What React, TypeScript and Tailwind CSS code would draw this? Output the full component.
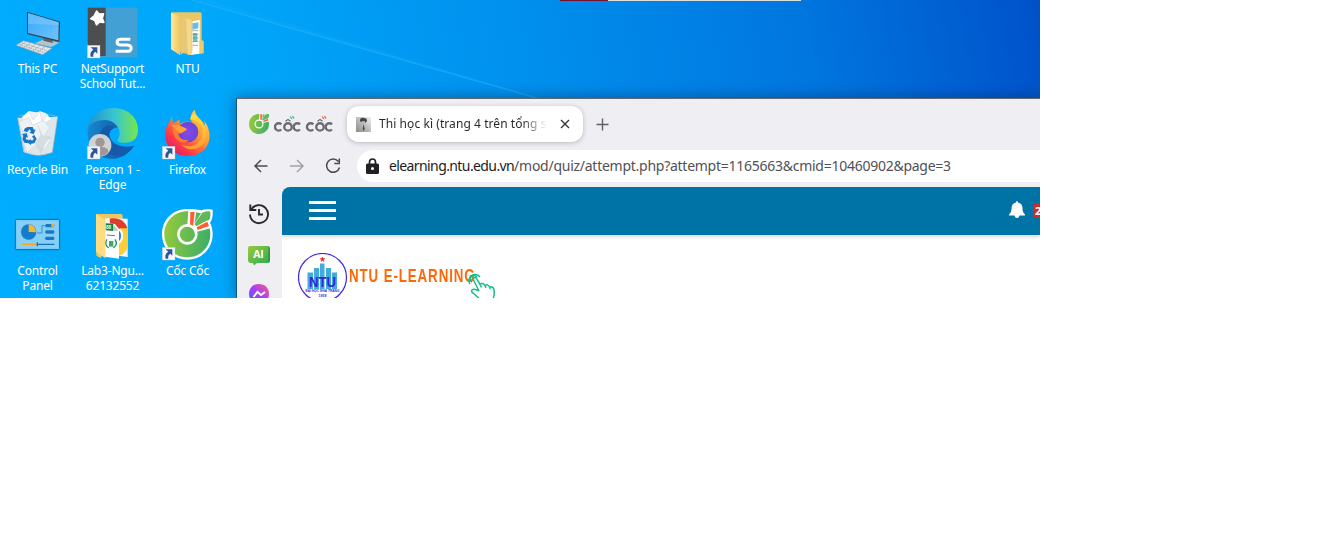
import type { ReactNode } from "react";

function Shortcut({ x, y }: { x: number; y: number }) {
  return (
    <g transform={`translate(${x} ${y})`}>
      <rect width="38" height="38" fill="#f4f6f8" stroke="#b9c4cf" strokeWidth="1" />
      <path d="M10 6h20v19l-6-6c-6 4-7 8-6 15h-8c-3-10 1-17 8-21z" fill="#2c559c" />
    </g>
  );
}

function PcIcon() {
  return (
    <svg className="h-[61px] w-[75px]" viewBox="0 0 225 183">
      <defs>
        <linearGradient id="screen" x1="0" x2="1" y1="0" y2="1">
          <stop offset="0" stopColor="#35a8f8" />
          <stop offset="1" stopColor="#71c3ff" />
        </linearGradient>
      </defs>
      <path d="M104 130l28-12 46 10-24 13z" fill="#b9c2c8" />
      <path d="M130 112l28 7v10l-28-7z" fill="#59646c" />
      <path d="M81 35l99 30-2 61-97-24z" fill="#38454f" />
      <path d="M84 39l92 28-1 54-91-22z" fill="url(#screen)" />
      <path d="M84 39l92 28v8L84 72z" fill="#8bd0ff" opacity=".45" />
      <path d="M70 122l86 23-28 19-80-28z" fill="#dfe4e7" stroke="#909ca5" strokeWidth="2" />
      <path d="M65 129l75 23M58 134l75 24M78 125l-20 13M92 129l-21 14M106 133l-21 15M120 137l-21 15M134 141l-22 16" stroke="#8d989f" strokeWidth="2" strokeDasharray="5 2" />
    </svg>
  );
}

function NetSupportIcon() {
  return (
    <svg className="h-[61px] w-[75px]" viewBox="225 0 225 183">
      <rect x="263" y="23" width="149" height="149" fill="#43a0d5" />
      <rect x="263" y="23" width="54" height="145" fill="#4c4e50" />
      <path d="M290 34l7 9 13-1-4 13 5 12-12-2-9 9-5-13-12-5 10-8z" fill="#fff" stroke="#fff" strokeWidth="6" strokeLinejoin="round" />
      <path d="M391 118h-27c-17 0-17 17 0 17h16c18 0 18 19 0 19h-33" fill="none" stroke="#fff" strokeWidth="9" />
      <Shortcut x={262} y={136} />
    </svg>
  );
}

function FolderIcon() {
  return (
    <svg className="h-[61px] w-[75px]" viewBox="450 0 225 183">
      <defs>
        <linearGradient id="folder">
          <stop offset="0" stopColor="#ffe69b" />
          <stop offset="1" stopColor="#edc95f" />
        </linearGradient>
      </defs>
      <path d="M514 37h87q4 0 4 5v78l6 4v36h-50l-47-10z" fill="#e9c765" />
      <path d="M572 66l27-7v102l-27 4z" fill="#fff" />
      <path d="M577 70l18-3v18l-18 4z" fill="#67bce8" />
      <path d="M577 92h18M577 103h18M577 114h18M577 125h18M577 136h17" stroke="#70808c" strokeWidth="2" />
      <path d="M579 99h13v26h-13z" fill="#2fa5a6" opacity=".7" />
      <path d="M598 122h12v38l-12 2z" fill="#f0cc69" />
      <path d="M514 39l58 15q5 1 5 7v90q0 8-6 14l-30-8z" fill="#e6c166" />
      <path d="M513 38l27 10v118l-22-15-5-6z" fill="url(#folder)" />
      <path d="M542 49l21 6v96l-21 13z" fill="#e9c875" />
      <path d="M559 54l16 6v102l-12 3z" fill="#f5d987" />
    </svg>
  );
}

function BinIcon() {
  return (
    <svg className="h-[61px] w-[75px]" viewBox="0 9 225 183">
      <path d="M53 60l120-4-16 107q-40 18-86 0z" fill="#dfe6ea" />
      <path d="M53 60l20 103 40 10 44-9 16-108-17-5-96 1z" fill="none" stroke="#a8b4bc" strokeWidth="2" />
      <path d="M65 58l21-18 19 6 15-6 18 6 15 17-31 17-39 2z" fill="#fff" />
      <path d="M85 39l15 27 20-25 6 28 18-20M60 70l27-12 11 24 32-15 19 22-14 21 19 14-20 31-27-14-25 22-14-33 19-20-22-13-7-24z" fill="#eef2f4" stroke="#d0d8dd" strokeWidth="2" />
      <path d="M112 75l9 36-15 24 17 34 15-36 17-15-28-8z" fill="#c7d0d5" opacity=".6" />
      <path d="M75 91l8-4h15l4 9 5-2-6 15-13-5 5-4-4-6-8 9-10-5zM103 111l7 12-7 13-10 1v5l-11-10 10-10v5h7l2-5-5-7zM66 108l14-2 4 13-5-2-2 7 9 1v11l-13-2-6-11 3-10z" fill="#1976c6" />
    </svg>
  );
}

function EdgeIcon() {
  return (
    <svg className="h-[61px] w-[75px]" viewBox="225 9 225 183">
      <defs>
        <linearGradient id="edgeTop">
          <stop offset="0" stopColor="#208fd1" />
          <stop offset=".55" stopColor="#39c6d0" />
          <stop offset="1" stopColor="#76e848" />
        </linearGradient>
        <linearGradient id="edgeBase">
          <stop offset="0" stopColor="#1686d2" />
          <stop offset="1" stopColor="#164d98" />
        </linearGradient>
      </defs>
      <path d="M263 96q14-48 60-50c31 1 48 25 46 48-20-13-40-2-40 15 0 29 39 45 73 34-18 29-47 41-72 39-47-4-69-43-67-86z" fill="url(#edgeBase)" />
      <path d="M321 83c-31 12-30 63 0 82 28 17 58 7 82-22-31 9-70 3-76-26-2-12 4-23 16-27-5-7-13-9-22-7z" fill="#155aaa" />
      <path d="M262 96c5-37 36-66 77-66 44 0 75 27 75 66 0 28-18 39-42 38-20 0-23-7-16-15 11-20-9-53-42-53-25 0-46 12-52 30z" fill="url(#edgeTop)" />
      <circle cx="300" cy="142" r="34" fill="#d1d2d3" />
      <circle cx="300" cy="133" r="14" fill="#9f9795" />
      <path d="M276 162q3-15 17-15h15q17 1 17 15-9 12-25 12-18 0-24-12z" fill="#9f9795" />
      <Shortcut x={262} y={145} />
    </svg>
  );
}

function FirefoxIcon() {
  return (
    <svg className="h-[61px] w-[75px]" viewBox="450 9 225 183">
      <defs>
        <linearGradient id="fire" x1="1" y1="0" x2=".15" y2="1">
          <stop offset="0" stopColor="#fff44f" />
          <stop offset=".45" stopColor="#ff9633" />
          <stop offset=".75" stopColor="#ff3b45" />
          <stop offset="1" stopColor="#d51572" />
        </linearGradient>
        <linearGradient id="flame" x1=".5" y1="0" x2=".5" y2="1">
          <stop offset="0" stopColor="#ffe23e" />
          <stop offset="1" stopColor="#ff9a33" />
        </linearGradient>
        <radialGradient id="globe">
          <stop offset="0" stopColor="#8b45ea" />
          <stop offset="1" stopColor="#6548d9" />
        </radialGradient>
      </defs>
      <path d="M518 56c-3 7-1 14 4 19l17-11v15c14-10 28-11 37-4-7-20-2-31 8-40 2 22 25 29 30 49 1-7 0-14-3-18 17 20 22 49 14 69-10 26-34 39-63 39-41 0-67-29-66-65 0-20 8-31 14-37 0-7 3-12 8-16z" fill="url(#fire)" />
      <path d="M570 64c35 6 48 31 35 55-11 24-39 33-62 19 22 30 76 15 76-26 0-22-8-34-15-43l-20-20c-9 3-13 7-14 15z" fill="url(#flame)" />
      <circle cx="564" cy="102" r="31" fill="url(#globe)" />
      <path d="M524 82l13 7q19-2 24 6l-16 10-11 4c5 13 16 20 33 16-15 16-38 8-44-13-7-14-6-27 1-30z" fill="#ff7930" />
      <path d="M515 82c16-4 32 2 46 12l-15 10c-13 0-20-9-31-22z" fill="#ffa038" />
      <Shortcut x={487} y={145} />
    </svg>
  );
}

function ControlIcon() {
  return (
    <svg className="h-[61px] w-[75px]" viewBox="0 12 225 183">
      <rect x="46" y="64" width="133" height="91" rx="3" fill="#72c6ef" stroke="#166794" strokeWidth="3" />
      <rect x="50" y="68" width="125" height="83" fill="#86d0f8" />
      <circle cx="86" cy="102" r="23" fill="#147ccc" />
      <path d="M86 102V79a23 23 0 0 1 22 24z" fill="#f9b72c" />
      <path d="M111 105h15V83h13M137 102h8M134 121h11" fill="none" stroke="#1977ae" strokeWidth="2" />
      <g fill="#1678c6">
        <rect x="136" y="78" width="27" height="10" rx="4" />
        <rect x="136" y="97" width="27" height="10" rx="4" />
        <rect x="136" y="116" width="27" height="10" rx="4" />
      </g>
      <path d="M154 78h8v9h-8z" fill="#f4a92b" />
      <path d="M65 139h47" stroke="#f6a51b" strokeWidth="4" />
      <path d="M112 139h51M112 133v12" stroke="#1671bd" strokeWidth="4" />
    </svg>
  );
}

function LabIcon() {
  return (
    <svg className="h-[61px] w-[75px]" viewBox="225 12 225 183">
      <path d="M289 48h74q5 0 5 6v19l-66 107-13-7z" fill="#edc75f" />
      <path d="M315 61l68 1v115l-62-8z" fill="#f1f5f5" />
      <path d="M329 62c31-5 53 11 55 40l-52 1z" fill="#de3c2d" />
      <path d="M360 91h24v55c-4 14-14 23-30 29l-9-20z" fill="#ffce36" />
      <path d="M352 91c14 1 20 14 17 27-1 12-8 20-18 20z" fill="#fff" />
      <path d="M353 97q10 2 10 17t-11 17z" fill="#2683dc" />
      <path d="M315 74l30 4 12 16v88l-42-6z" fill="#fff" />
      <path d="M317 76l23 1v22l-23-2z" fill="#14823d" />
      <text x="318" y="94" fontSize="14" fontWeight="700" fontFamily="Liberation Sans, sans-serif" fill="#fff">88</text>
      <path d="M341 80v18h14z" fill="#b9c6c1" />
      <path d="M321 124q-10 15 5 26M345 124q10 15-5 26" fill="none" stroke="#17985a" strokeWidth="4" />
      <path d="M327 129h13v17h-13z" fill="#3da873" />
      <path d="M320 111l25 2" stroke="#777" strokeWidth="3" />
      <path d="M288 48l28 18v115l-28-20z" fill="#ffdc82" />
    </svg>
  );
}

function Leaf({ outlined = false }: { outlined?: boolean }) {
  return (
    <g>
      {outlined && (
        <path d="M562 33c-44 0-76 33-76 76s33 76 76 76 76-33 76-76c0-14-3-25-8-35 8-10 9-24 8-39-12-2-24-2-34 2-12-3-26-4-42-4z" fill="#fff" />
      )}
      <path d="M562 40c-39 0-69 30-69 69s30 69 69 69 69-30 69-69c0-13-3-25-9-35 8-9 10-20 9-32-10-1-20 0-29 4-12-4-25-6-40-6z" fill="url(#leafFill)" />
      <path d="M565 38h24l-5 38 24-38 10 5-24 36 32-13 6 25-44 11-26-22z" fill="#fff" />
      <path d="M583 79l24-35q10-5 23-4 0 17-9 27l-31 18z" fill="#65b85a" />
      <path d="M571 42h13l-5 46-9-2zM590 88l32-17 5 13-34 12z" fill="#ff5b35" />
      <circle cx="562" cy="109" r="27" fill="url(#leafFill)" stroke="#fff" strokeWidth="8" />
    </g>
  );
}

function CocIcon() {
  return (
    <svg className="h-[61px] w-[75px]" viewBox="450 12 225 183">
      <defs>
        <linearGradient id="leafFill" gradientUnits="userSpaceOnUse" x1="493" y1="100" x2="631" y2="120">
          <stop stopColor="#95c93b" />
          <stop offset="1" stopColor="#3cae68" />
        </linearGradient>
      </defs>
      <Leaf outlined />
      <Shortcut x={487} y={148} />
    </svg>
  );
}

const desktopItems: { icon: ReactNode; lines: string[] }[] = [
  { icon: <PcIcon />, lines: ["This PC"] },
  { icon: <NetSupportIcon />, lines: ["NetSupport", "School Tut..."] },
  { icon: <FolderIcon />, lines: ["NTU"] },
  { icon: <BinIcon />, lines: ["Recycle Bin"] },
  { icon: <EdgeIcon />, lines: ["Person 1 -", "Edge"] },
  { icon: <FirefoxIcon />, lines: ["Firefox"] },
  { icon: <ControlIcon />, lines: ["Control", "Panel"] },
  { icon: <LabIcon />, lines: ["Lab3-Ngu...", "62132552"] },
  { icon: <CocIcon />, lines: ["Cốc Cốc"] },
];

function TabStrip() {
  return (
    <div className="flex h-[51px] shrink-0 items-start pl-[12px]">
      <svg className="mt-[15px] h-[20px] w-[20px] shrink-0" viewBox="493 40 138 138">
        <Leaf />
      </svg>
      <svg className="mt-[12px] ml-[5px] h-[24px] w-[62px] shrink-0" viewBox="0 0 62 24">
        <g fill="none" stroke="#6b6d72" strokeWidth="2.400">
          <path d="M7.300 13.300a3.700 3.700 0 1 0 0 5.200M26 13.300a3.700 3.700 0 1 0 0 5.200M39.300 13.300a3.700 3.700 0 1 0 0 5.200M58 13.300a3.700 3.700 0 1 0 0 5.200" />
          <circle cx="14" cy="15.900" r="3.700" />
          <circle cx="46" cy="15.900" r="3.700" />
          <path d="M11.500 10.300l2.500-1.800 2.500 1.800M43.500 10.300l2.500-1.800 2.500 1.800" strokeWidth="1.200" />
        </g>
        <path d="M16 5.500l2 2.500M18.500 5l1.500 2.500" stroke="#36b572" strokeWidth="1.200" />
        <path d="M48 5.500l2 2.500M50.500 5l1.500 2.500" stroke="#ed593d" strokeWidth="1.200" />
      </svg>
      <div className="mt-[7px] ml-[11px] flex h-[36px] w-[236px] shrink-0 items-center rounded-[12px] bg-white pl-[9px] shadow-[0_1px_5px_rgba(60,60,80,0.3)]">
        <svg className="h-[15px] w-[15px] shrink-0" viewBox="0 0 15 15">
          <defs>
            <linearGradient id="portrait" x1="1" x2="0" y1="0" y2="1">
              <stop stopColor="#f2f2f2" />
              <stop offset="1" stopColor="#888" />
            </linearGradient>
          </defs>
          <path d="M0 0h15v15H0z" fill="url(#portrait)" />
          <path d="M4 4q0-4 4-3 3 0 3 3L9 6 8 4 5 5z" fill="#444" />
          <path d="M6 4.500l2.500-.5.5 2-1.500 2H6z" fill="#bbb" />
          <path d="M7.500 7l1.200 5-1 2-.9-2z" fill="#444" />
        </svg>
        <div className="ml-[8px] w-[168px] overflow-hidden bg-linear-to-r from-[#25262a] from-85% to-transparent bg-clip-text text-[12px] leading-[20px] tracking-[0.07px] whitespace-nowrap text-transparent">
          Thi học kì (trang 4 trên tổng s
        </div>
        <svg className="ml-[13px] h-[10px] w-[10px]" viewBox="0 0 10 10">
          <path d="M1 1l8 8M9 1L1 9" stroke="#303136" strokeWidth="1.300" />
        </svg>
      </div>
      <svg className="mt-[19px] ml-[13px] h-[13px] w-[13px]" viewBox="0 0 13 13">
        <path d="M6.500 .5v12M.5 6.500h12" stroke="#606166" strokeWidth="1.400" />
      </svg>
    </div>
  );
}

function AddressBar() {
  return (
    <div className="flex h-[32px] shrink-0 items-center">
      <svg className="h-[32px] w-[120px] shrink-0" viewBox="0 0 120 32" fill="none" strokeWidth="1.500">
        <path d="M30.500 16H18.500M24 10l-6 6 6 6" stroke="#4b4c50" />
        <path d="M53 16h12M60 10l6 6-6 6" stroke="#a3a4a9" />
        <path d="M101.300 11.500a6.600 6.600 0 1 0 1.200 6M102.300 8.500v5h-5" stroke="#4b4c50" />
      </svg>
      <div className="flex h-[32px] flex-1 items-center rounded-l-[16px] bg-white pl-[9px]">
        <svg className="h-[17px] w-[13px] shrink-0" viewBox="0 0 13 17">
          <path d="M3.500 6.500V4a3 3 0 0 1 6 0v2.500" fill="none" stroke="#202124" strokeWidth="1.700" />
          <rect y="5.500" width="13" height="10.500" rx="1.500" fill="#202124" />
          <circle cx="6.500" cy="10.500" r="1.500" fill="#fff" />
        </svg>
        <div className="ml-[10px] text-[14px] leading-[20px] tracking-[-0.26px] whitespace-nowrap text-[#505156]">
          <span className="tracking-[-0.6px] text-[#202124]">elearning.ntu.edu.vn</span>/mod/quiz/attempt.php?attempt=1165663&amp;cmid=10460902&amp;page=3
        </div>
      </div>
    </div>
  );
}

function SideRail() {
  return (
    <div className="w-[45px] shrink-0">
      <svg className="h-[115px] w-[45px]" viewBox="0 0 45 115">
        <defs>
          <linearGradient id="ai" x1="0" y1="0" x2="1" y2="1">
            <stop stopColor="#99ca3c" />
            <stop offset="1" stopColor="#28aa56" />
          </linearGradient>
          <linearGradient id="msg" x1="0" y1="1" x2="1" y2="0">
            <stop stopColor="#4b62ff" />
            <stop offset=".5" stopColor="#a340f5" />
            <stop offset="1" stopColor="#ff5b8a" />
          </linearGradient>
        </defs>
        <path d="M14 23A9 9 0 1 1 13 27.500M13.300 17.500v5.500h6M22 22v5.500h4" fill="none" stroke="#292a2e" strokeWidth="1.900" />
        <path d="M13 59h18q2 0 2 2v12q0 3-2 3H20l-3 2.500-1-2.500h-2q-3 0-3-3V61q0-2 2-2z" fill="url(#ai)" />
        <path d="M31.500 60q1.500 0 1.500 2v11q0 2-1.500 2z" fill="#227d4b" opacity=".7" />
        <text x="21.500" y="70.700" textAnchor="middle" fill="#fff" fontSize="10.500" fontWeight="700" fontFamily="Open Sans, sans-serif">AI</text>
        <path d="M22 97c6 0 10 4 10 10s-4 10-10 10-10-4-10-10 4-10 10-10z" fill="url(#msg)" />
        <path d="M16.500 110l4-5 3.500 3 4-3" fill="none" stroke="#fff" strokeWidth="2" />
      </svg>
    </div>
  );
}

function SchoolSeal() {
  return (
    <svg className="h-[50px] w-[50px] shrink-0" viewBox="0 0 50 50">
      <circle cx="24.500" cy="24.500" r="24" fill="#fff" stroke="#3a26e3" strokeWidth="1.200" />
      <path d="M9.500 19.500H15V36H9.500zM16 15h5v21h-5zM22 10.500h4.500V36H22zM28 15h5v21h-5zM34 19.500h5V36h-5z" fill="#43aade" />
      <path d="M24.500 4l.6 1.500 1.700.1-1.300 1.100.4 1.700-1.400-.9-1.400.9.4-1.700-1.300-1.100 1.700-.1z" fill="#ef2929" stroke="#ef2929" strokeWidth=".6" />
      <text x="24.500" y="34" textAnchor="middle" textLength="27" lengthAdjust="spacingAndGlyphs" fontFamily="Liberation Sans, sans-serif" fontSize="14.500" fontWeight="700" fill="#3425db">NTU</text>
      <text x="24.500" y="39.300" textAnchor="middle" textLength="34" lengthAdjust="spacingAndGlyphs" fontFamily="Liberation Sans, sans-serif" fontSize="3.800" fontWeight="700" fill="#3a26e3">ĐẠI HỌC NHA TRANG</text>
      <text x="24.500" y="43.500" textAnchor="middle" fontFamily="Liberation Sans, sans-serif" fontSize="3.500" fontWeight="700" fill="#3a26e3">1959</text>
    </svg>
  );
}

function Page() {
  return (
    <div className="min-w-0 flex-1 overflow-hidden rounded-tl-[8px] bg-white">
      <div className="flex h-[48px] items-start bg-[#0073a6] shadow-[0_2px_4px_rgba(0,0,0,0.16)]">
        <svg className="mt-[14px] ml-[27px] h-[19px] w-[27px]" viewBox="0 0 27 19">
          <path d="M0 1.500h27M0 9.500h27M0 17.500h27" stroke="#fff" strokeWidth="3" />
        </svg>
        <svg className="mt-[14px] ml-auto h-[17px] w-[16px]" viewBox="0 0 16 17">
          <path d="M8 0q1 0 1 1.500c3 .5 4.500 2.500 4.500 6 0 3 .8 4.500 2.500 6v1H0v-1c1.700-1.500 2.500-3 2.500-6 0-3.500 1.500-5.500 4.500-6Q7 0 8 0zM5.500 14.500h5Q10 17 8 17t-2.500-2.500z" fill="#fff" />
        </svg>
        <div className="mt-[16px] ml-[8px] h-[15px] w-[7px] overflow-hidden rounded-l-[2px] bg-[#cf2d24] pl-[2px] text-[11px] leading-[15px] font-bold text-white">
          2
        </div>
      </div>
      <div className="flex pt-[18px] pl-[16px]">
        <SchoolSeal />
        <div className="mt-[11px] ml-[1px] w-[126px] shrink-0">
          <div className="w-max origin-left scale-x-[0.7] text-[19px] leading-[24px] font-bold tracking-[1.3px] whitespace-nowrap text-[#ff6809] [font-family:'Liberation_Sans',sans-serif]">
            NTU E-LEARNING
          </div>
        </div>
        <svg className="relative mt-[18px] -ml-[9px] h-[30px] w-[30px] shrink-0" viewBox="0 0 30 30" fill="none" stroke="#18bd89" strokeWidth="1.500">
          <path d="M4 13a6 6 0 1 1 10-7" />
          <path d="M6 11a3.500 3.500 0 1 1 5-4.500" />
          <path d="M13 20L7.500 9q-.5-2.500 1.500-2.500 1 0 1.700 1.500l3.300 5.500q3-2.500 5 1 3-2 4.500 1.500 3.500-1 4.500 2.500 1 6-2 12M13 20q-5-3-7-1-1 2 1 3l9 8M14 13.500l1.500 3M19 14.500l1 2.500M23.500 16l.8 2" />
        </svg>
      </div>
    </div>
  );
}

export default function App() {
  return (
    <div className="h-[548px] w-[1338px] overflow-hidden bg-white [font-family:'Noto_Sans','Open_Sans',sans-serif]">
      <div className="relative h-[298px] w-[1040px] overflow-hidden bg-[linear-gradient(80deg,#00adff_0%,#00a6fa_26%,#009af3_40%,#008eec_54%,#0076df_78%,#0055cc_98%,#0050c6_100%)]">
        <svg className="absolute top-0 left-0 h-[100px] w-[1040px]" viewBox="0 0 1040 100">
          <path d="M190 0h20L540 98h-6z" fill="#38bdff" opacity=".1" />
          <path d="M192 0l345 98" stroke="#25b7ff" strokeWidth="1.500" opacity=".45" />
        </svg>
        <div className="absolute top-0 left-[560px] flex h-px w-[241px] bg-[#dededa]">
          <div className="w-[48px] bg-[#75112f]" />
        </div>
        <div className="grid w-[225px] auto-rows-[101px] grid-cols-3">
          {desktopItems.map(({ icon, lines }) => (
            <div key={lines[0]} className="flex flex-col items-center">
              {icon}
              {lines.map((line) => (
                <div key={line} className="h-[15px] text-[12px] leading-[15px] tracking-[-0.2px] whitespace-nowrap text-white">
                  {line}
                </div>
              ))}
            </div>
          ))}
        </div>
        <div className="absolute top-[98px] left-[236px] flex h-[200px] w-[804px] flex-col border-t border-l border-t-[#626772] border-l-[#145777] bg-[#efeef3] shadow-[0_0_14px_rgba(0,36,68,0.48)]">
          <TabStrip />
          <AddressBar />
          <div className="mt-[5px] flex min-h-0 flex-1">
            <SideRail />
            <Page />
          </div>
        </div>
      </div>
    </div>
  );
}
